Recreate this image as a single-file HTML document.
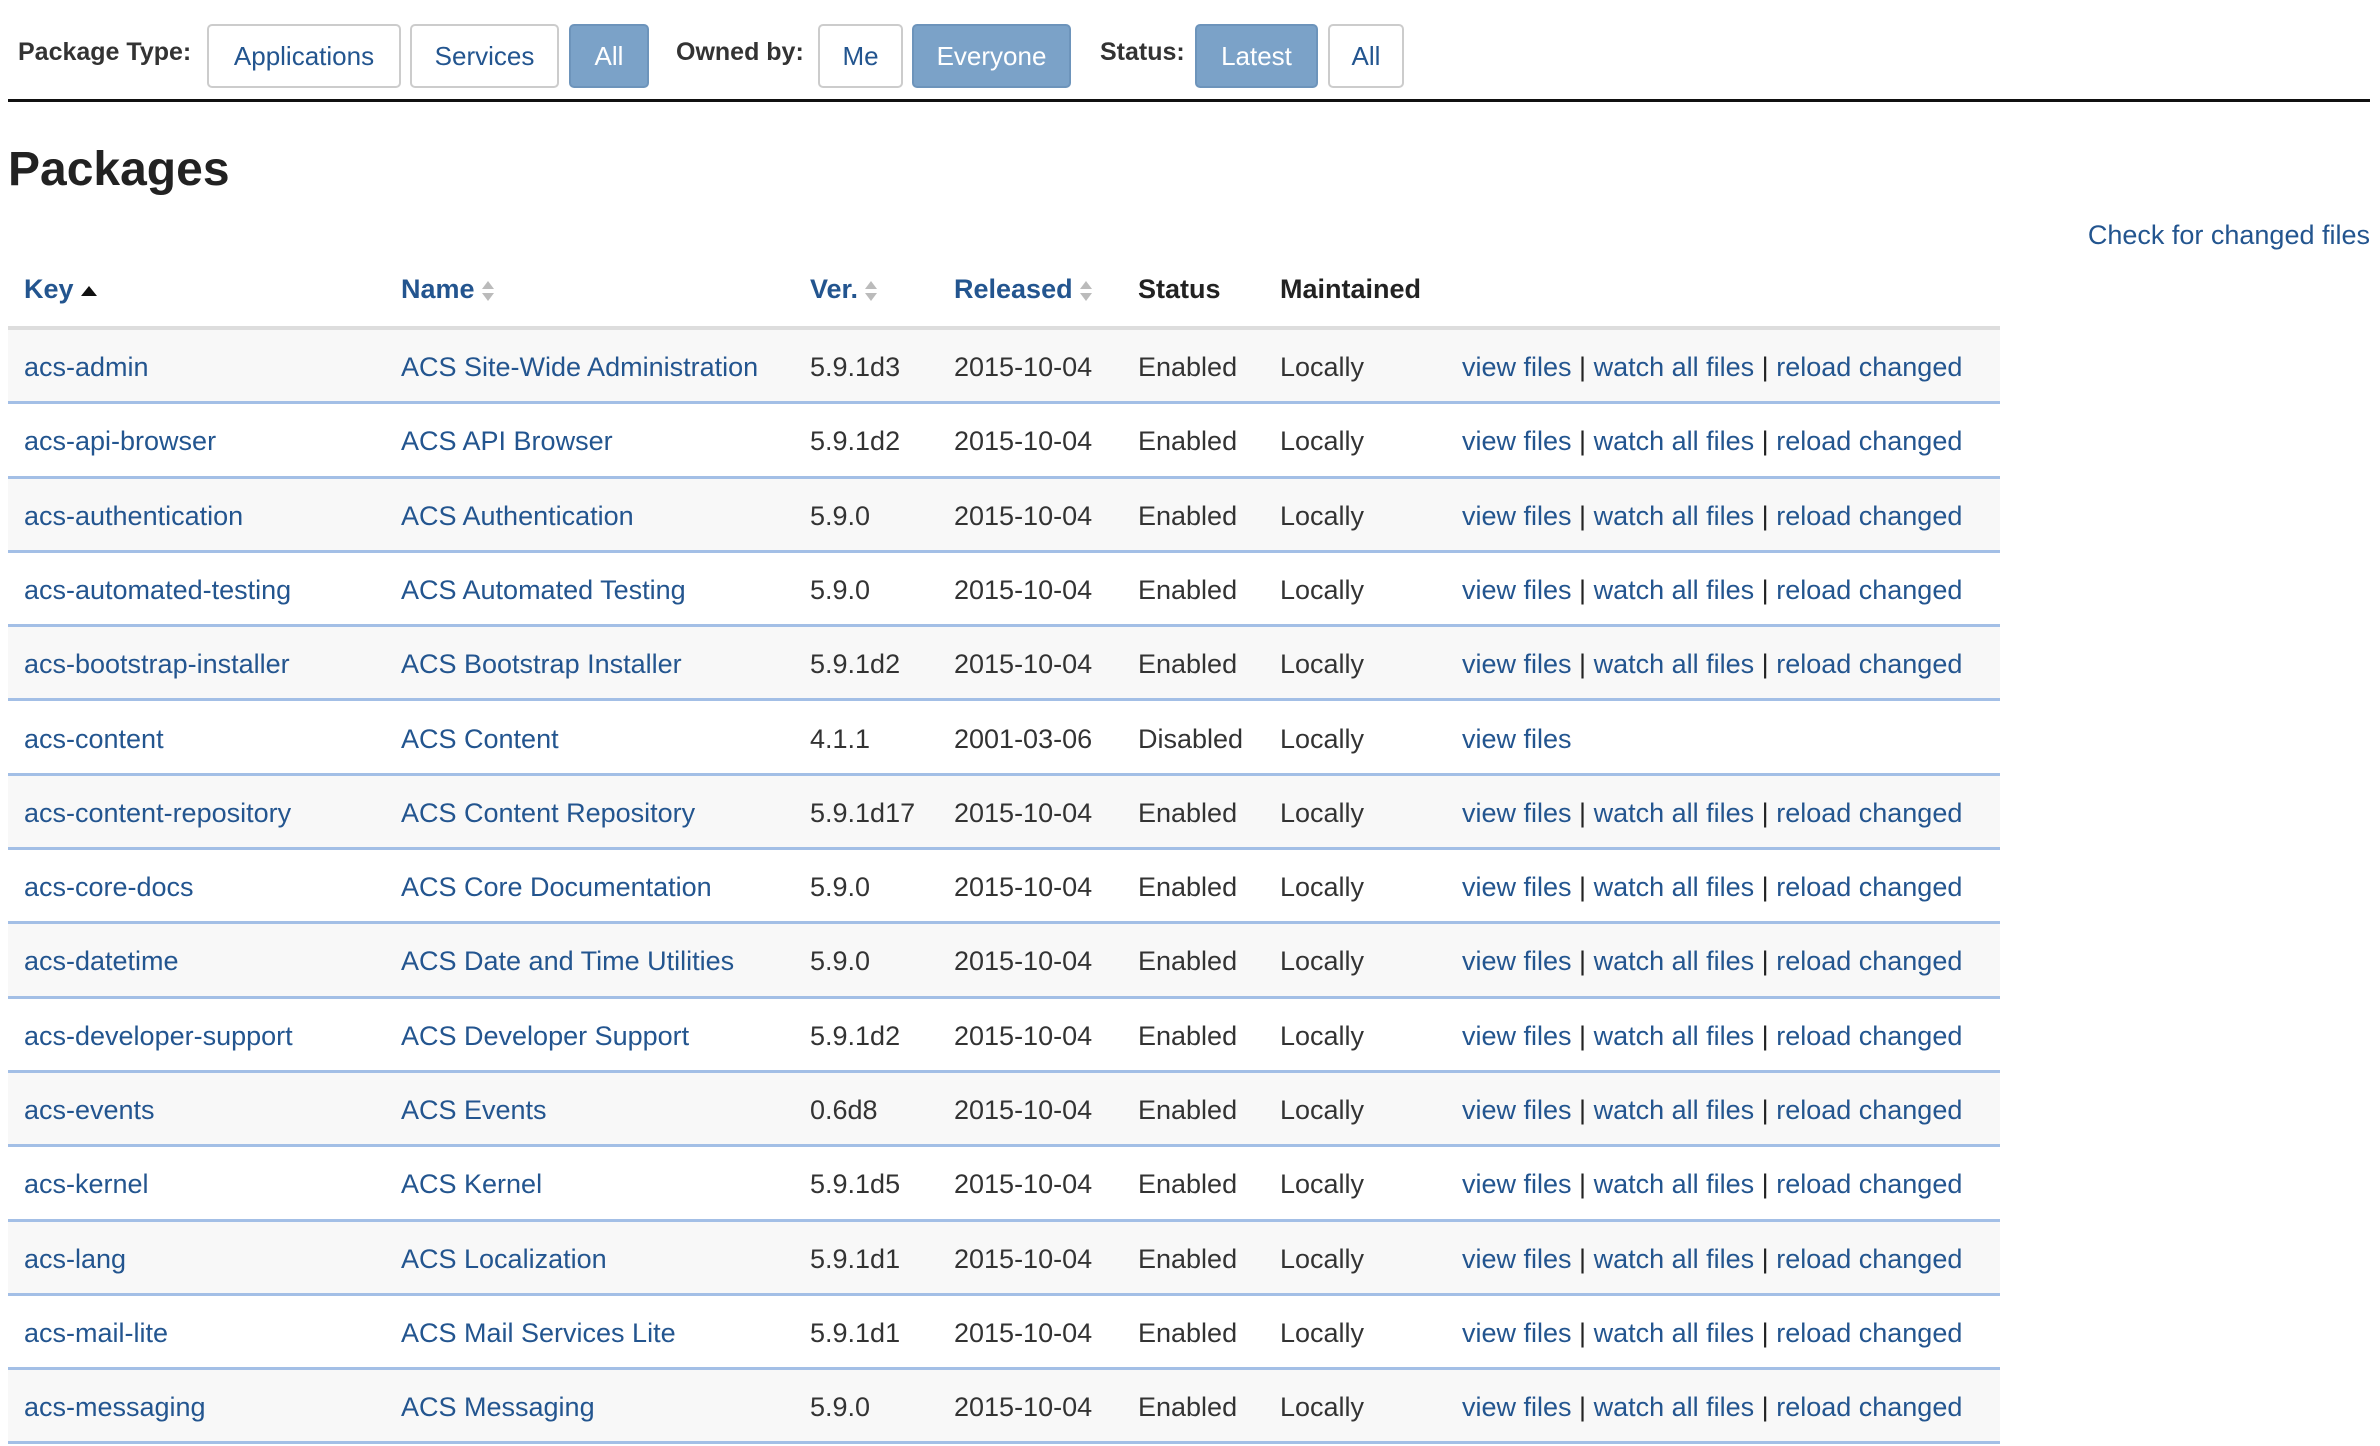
<!DOCTYPE html>
<html><head><meta charset="utf-8"><style>
*{box-sizing:border-box;margin:0;padding:0}
body{width:2380px;height:1446px;overflow:hidden;background:#fff;font-family:"Liberation Sans",sans-serif;color:#333;position:relative}
.a{position:absolute;white-space:nowrap}
.lbl{font-weight:bold;font-size:25px;top:38px}
.btn{position:absolute;top:24px;height:64px;border:2px solid #ccc;border-radius:5px;font-size:26px;color:#23558f;display:flex;align-items:center;justify-content:center;background:#fff}
.on{background:#7ba2c8;border-color:#6d94bb;color:#fff}
a{color:#23558f;text-decoration:none}
.hd{position:absolute;top:274px;font-size:27px;font-weight:bold}
.row{position:absolute;left:8px;width:1992px;height:74.3px;border-bottom:3px solid #a3bfe6;font-size:27px}
.row span{position:absolute;top:22px;white-space:nowrap}
.s{background:#f8f8f8}
.sep{color:#222}
.arr{display:inline-block;vertical-align:middle;margin-left:6px}
</style></head><body>
<div class="a lbl" style="left:18px">Package Type:</div>
<div class="btn" style="left:207px;width:194px">Applications</div>
<div class="btn" style="left:410px;width:149px">Services</div>
<div class="btn on" style="left:569px;width:80px">All</div>
<div class="a lbl" style="left:676px">Owned by:</div>
<div class="btn" style="left:818px;width:85px">Me</div>
<div class="btn on" style="left:912px;width:159px">Everyone</div>
<div class="a lbl" style="left:1100px">Status:</div>
<div class="btn on" style="left:1195px;width:123px">Latest</div>
<div class="btn" style="left:1328px;width:76px">All</div>
<div class="a" style="left:8px;top:99px;width:2362px;height:3px;background:#111"></div>
<div class="a" style="left:8px;top:142px;font-size:48px;font-weight:bold;color:#222">Packages</div>
<div class="a" style="right:10px;top:220px;font-size:27px"><a>Check for changed files</a></div>
<div class="hd" style="left:24px"><a>Key</a><svg class="arr" width="18" height="14" viewBox="0 0 18 14"><path d="M1 12L9 2L17 12Z" fill="#111"/></svg></div>
<div class="hd" style="left:401px"><a>Name</a><svg class="arr" width="14" height="24" viewBox="0 0 14 24"><path d="M1 10L7 2L13 10ZM1 14L7 22L13 14Z" fill="#bbb"/></svg></div>
<div class="hd" style="left:810px"><a>Ver.</a><svg class="arr" width="14" height="24" viewBox="0 0 14 24"><path d="M1 10L7 2L13 10ZM1 14L7 22L13 14Z" fill="#bbb"/></svg></div>
<div class="hd" style="left:954px"><a>Released</a><svg class="arr" width="14" height="24" viewBox="0 0 14 24"><path d="M1 10L7 2L13 10ZM1 14L7 22L13 14Z" fill="#bbb"/></svg></div>
<div class="hd" style="left:1138px;color:#222">Status</div>
<div class="hd" style="left:1280px;color:#222">Maintained</div>
<div class="a" style="left:8px;top:326px;width:1992px;height:4px;background:#ddd"></div>
<div id="rows"></div>
<script>
var d=[["acs-admin","ACS Site-Wide Administration","5.9.1d3","2015-10-04","Enabled",1],
["acs-api-browser","ACS API Browser","5.9.1d2","2015-10-04","Enabled",1],
["acs-authentication","ACS Authentication","5.9.0","2015-10-04","Enabled",1],
["acs-automated-testing","ACS Automated Testing","5.9.0","2015-10-04","Enabled",1],
["acs-bootstrap-installer","ACS Bootstrap Installer","5.9.1d2","2015-10-04","Enabled",1],
["acs-content","ACS Content","4.1.1","2001-03-06","Disabled",0],
["acs-content-repository","ACS Content Repository","5.9.1d17","2015-10-04","Enabled",1],
["acs-core-docs","ACS Core Documentation","5.9.0","2015-10-04","Enabled",1],
["acs-datetime","ACS Date and Time Utilities","5.9.0","2015-10-04","Enabled",1],
["acs-developer-support","ACS Developer Support","5.9.1d2","2015-10-04","Enabled",1],
["acs-events","ACS Events","0.6d8","2015-10-04","Enabled",1],
["acs-kernel","ACS Kernel","5.9.1d5","2015-10-04","Enabled",1],
["acs-lang","ACS Localization","5.9.1d1","2015-10-04","Enabled",1],
["acs-mail-lite","ACS Mail Services Lite","5.9.1d1","2015-10-04","Enabled",1],
["acs-messaging","ACS Messaging","5.9.0","2015-10-04","Enabled",1]];
var h="";
d.forEach(function(r,i){
var t=330+i*74.3;
h+='<div class="row'+(i%2==0?' s':'')+'" style="top:'+t+'px">'+
'<span style="left:16px"><a>'+r[0]+'</a></span>'+
'<span style="left:393px"><a>'+r[1]+'</a></span>'+
'<span style="left:802px">'+r[2]+'</span>'+
'<span style="left:946px">'+r[3]+'</span>'+
'<span style="left:1130px">'+r[4]+'</span>'+
'<span style="left:1272px">Locally</span>'+
'<span style="left:1454px"><a>view files</a>'+(r[5]?' <span class="sep" style="position:static">|</span> <a>watch all files</a> <span class="sep" style="position:static">|</span> <a>reload changed</a>':'')+'</span></div>';
});
document.getElementById("rows").innerHTML=h;
</script>
</body></html>
